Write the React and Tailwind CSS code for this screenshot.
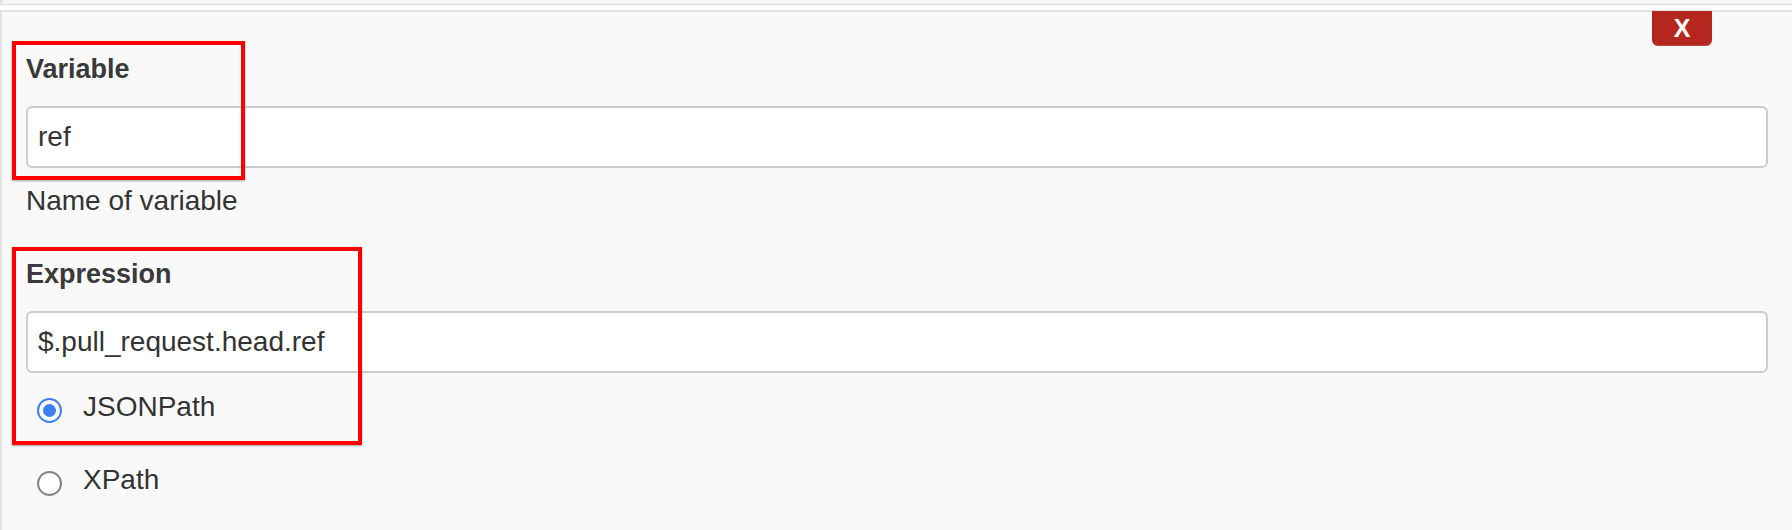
export default function App() {
  return (
    <div className="w-[1792px] h-[530px] overflow-hidden bg-white text-[#333] font-['Liberation_Sans',Arial,sans-serif]">
      {/* Bande du panneau précédent */}
      <div className="h-[5px] bg-[#f7f7f7] border-l-2 border-l-[#e3e3e3] border-b border-b-[#dcdcdc]" />

      {/* Panneau paramètre */}
      <div className="relative mt-[5px] h-[520px] bg-[#f9f9f9] border-t-2 border-l-2 border-[#e3e3e3] pt-[41px] pl-6 pr-6">
        {/* Bouton supprimer */}
        <button className="absolute top-[-1px] right-[80px] w-[60px] h-[35px] bg-[#b4261e] border-b border-[#c4463e] rounded-b-[6px] text-white text-[25px] font-bold leading-none flex items-center justify-center">
          X
        </button>

        <div className="text-[27px] font-bold leading-[32px] text-[#3a3a3a]">Variable</div>
        <input
          readOnly
          value="ref"
          className="mt-[21px] block w-full h-[62px] bg-white border-2 border-[#cccccc] rounded-[6px] px-[10px] text-[28px] text-[#333] outline-none"
        />
        <div className="mt-[17px] text-[28px] leading-[32px]">Name of variable</div>

        <div className="mt-[41px] text-[27px] font-bold leading-[32px] text-[#3a3a3a]">Expression</div>
        <input
          readOnly
          value="$.pull_request.head.ref"
          className="mt-[21px] block w-full h-[62px] bg-white border-2 border-[#cccccc] rounded-[6px] px-[10px] text-[28px] text-[#333] outline-none"
        />

        {/* Boutons radio */}
        <label className="mt-[18px] flex items-start text-[28px] leading-[32px]">
          <span className="ml-[11px] mt-[7px] w-[25px] h-[25px] rounded-full border-[2.5px] border-[#3d7ef5] bg-white flex items-center justify-center shrink-0">
            <span className="w-[13px] h-[13px] rounded-full bg-[#3d7ef5]" />
          </span>
          <span className="ml-[21px]">JSONPath</span>
        </label>
        <label className="mt-[41px] flex items-start text-[28px] leading-[32px]">
          <span className="ml-[11px] mt-[7px] w-[25px] h-[25px] rounded-full border-2 border-[#858585] bg-white shrink-0" />
          <span className="ml-[21px]">XPath</span>
        </label>

        {/* Annotations */}
        <div className="absolute left-[10px] top-[29px] w-[233px] h-[139px] border-4 border-[#ff0000] shadow-[0_1px_2px_rgba(0,0,0,0.35)]" />
        <div className="absolute left-[10px] top-[235px] w-[350px] h-[198px] border-4 border-[#ff0000] shadow-[0_1px_2px_rgba(0,0,0,0.35)]" />
      </div>
    </div>
  )
}
